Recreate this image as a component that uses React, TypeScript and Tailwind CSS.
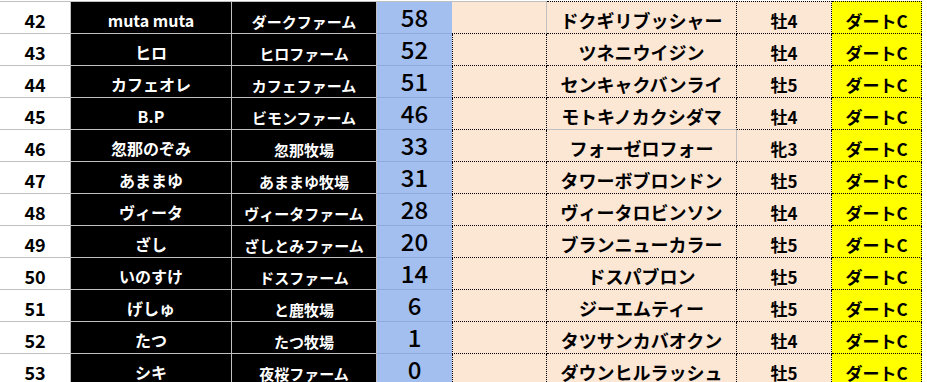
import React from "react";

const rows = [
  { no: 42, owner: "muta muta", farm: "ダークファーム", pt: 58, horse: "ドクギリブッシャー", sex: "牡4" },
  { no: 43, owner: "ヒロ", farm: "ヒロファーム", pt: 52, horse: "ツネニウイジン", sex: "牡4" },
  { no: 44, owner: "カフェオレ", farm: "カフェファーム", pt: 51, horse: "センキャクバンライ", sex: "牡5" },
  { no: 45, owner: "B.P", farm: "ビモンファーム", pt: 46, horse: "モトキノカクシダマ", sex: "牡4" },
  { no: 46, owner: "忽那のぞみ", farm: "忽那牧場", pt: 33, horse: "フォーゼロフォー", sex: "牝3" },
  { no: 47, owner: "あままゆ", farm: "あままゆ牧場", pt: 31, horse: "タワーボブロンドン", sex: "牡5" },
  { no: 48, owner: "ヴィータ", farm: "ヴィータファーム", pt: 28, horse: "ヴィータロビンソン", sex: "牡4" },
  { no: 49, owner: "ざし", farm: "ざしとみファーム", pt: 20, horse: "ブランニューカラー", sex: "牡5" },
  { no: 50, owner: "いのすけ", farm: "ドスファーム", pt: 14, horse: "ドスパブロン", sex: "牡5" },
  { no: 51, owner: "げしゅ", farm: "と鹿牧場", pt: 6, horse: "ジーエムティー", sex: "牡5" },
  { no: 52, owner: "たつ", farm: "たつ牧場", pt: 1, horse: "タツサンカバオクン", sex: "牡4" },
  { no: 53, owner: "シキ", farm: "夜桜ファーム", pt: 0, horse: "ダウンヒルラッシュ", sex: "牡5" },
];

const cell = "flex items-end justify-center leading-none whitespace-nowrap";

const App = () => {
  return (
    <div
      className="w-[927px] h-[382px] overflow-hidden bg-white pt-px"
      style={{ fontFamily: '"Noto Sans CJK JP", "Noto Sans", sans-serif' }}
    >
      {rows.map((r, i) => {
        const first = i === 0;
        const beforeFilly = r.no === 45;
        const filly = r.no === 46;
        return (
          <div
            key={r.no}
            className={`grid grid-cols-[71px_161px_145px_75px_95px_190px_95px_90px_1fr] ${first ? "h-[33px]" : "h-[32px]"}`}
          >
            <div className={`${cell} bg-white border-r border-b border-[#c0c0c0] ${first ? "border-t" : ""} pb-[4px] text-[18px] font-bold text-black`}>
              {r.no}
            </div>
            <div className={`${cell} bg-black border-r border-b border-[#c0c0c0] ${first ? "border-t" : ""} pb-[5px] text-[16px] font-bold text-white`}>
              {r.owner}
            </div>
            <div className={`${cell} bg-black border-r border-b border-[#c0c0c0] ${first ? "border-t" : ""} pb-[4px] text-[15px] font-bold text-white`}>
              {r.farm}
            </div>
            <div className={`flex items-center justify-center bg-[#a3bff0] border-b border-[#8eaadc] ${first ? "border-t border-t-[#c0c0c0]" : ""} pb-[2px] text-[24px] leading-[26px] font-medium text-black`}>
              {r.pt}
            </div>
            <div
              className={`bg-[#fce6d4] border-b border-r border-dotted border-black ${
                first ? "border-t border-t-[#c0c0c0] border-r-[#c0c0c0] [border-top-style:solid] [border-right-style:solid]" : "border-l"
              }`}
            />
            <div
              className={`${cell} bg-[#fce6d4] border-b border-r border-dotted border-black ${first ? "border-t" : ""} ${
                beforeFilly ? "border-b-[#c0c0c0] [border-bottom-style:solid]" : ""
              } ${filly ? "border-r-[#c0c0c0] [border-right-style:solid]" : ""} pb-[4px] text-[18px] font-bold text-black`}
            >
              {r.horse}
            </div>
            <div className={`${cell} bg-[#fce6d4] border-b border-r border-dotted border-black ${first ? "border-t" : ""} pb-[4px] text-[17px] font-bold text-black`}>
              {r.sex}
            </div>
            <div className={`${cell} bg-[#ffff00] border-b border-r border-dotted border-black ${first ? "border-t" : ""} pb-[4px] text-[17px] font-bold text-black`}>
              ダートC
            </div>
            <div className="bg-white" />
          </div>
        );
      })}
    </div>
  );
};

export default App;
